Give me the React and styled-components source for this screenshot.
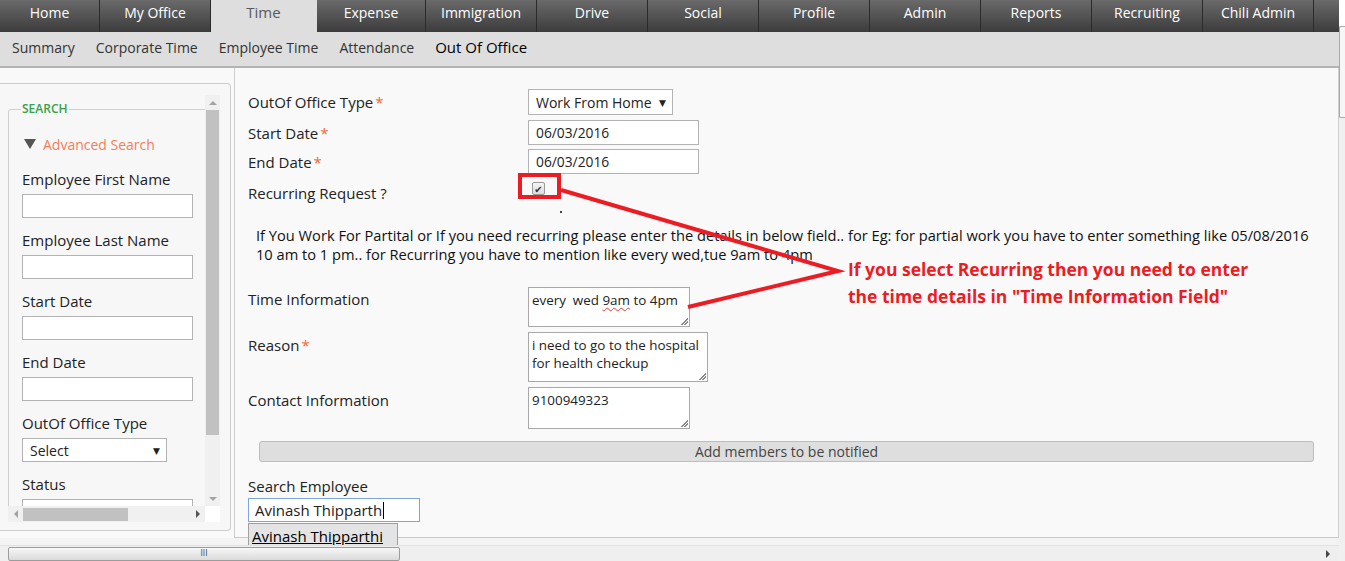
import React from 'react';
import styled, { createGlobalStyle } from 'styled-components';

const Global = createGlobalStyle`
  html, body { margin: 0; padding: 0; background: #f9f9f9; }
  body { font-family: "Open Sans", "DejaVu Sans", sans-serif; color: #222; }
  * { box-sizing: border-box; }
`;

const Screen = styled.div`
  position: relative;
  width: 1345px;
  height: 561px;
  overflow: hidden;
  display: grid;
  grid-template-columns: 1339px 6px;
  grid-template-rows: 545px 16px;
`;

const Page = styled.div`
  display: flex;
  flex-direction: column;
  min-height: 0;
  background: #f3f3f3;
`;

const TopNav = styled.nav`
  display: flex;
  height: 32px;
  background: linear-gradient(#6a6a6a, #3c3c3c);
`;

const Tab = styled.div`
  width: ${p => p.w}px;
  display: flex;
  align-items: center;
  justify-content: center;
  font-size: ${p => (p.active ? 15 : 14)}px;
  color: ${p => (p.active ? '#5a5a5a' : '#fff')};
  background: ${p => (p.active ? '#dedede' : 'transparent')};
  border-right: 1px solid ${p => (p.active ? '#dedede' : '#2b2b2b')};
  padding-bottom: 8px;
`;

const SubNav = styled.div`
  display: flex;
  align-items: center;
  gap: 21px;
  height: 36px;
  padding: 0 0 4px 12px;
  background: #dedede;
  border-bottom: 2px solid #b4b4b4;
`;

const SubItem = styled.span`
  font-size: ${p => (p.active ? 15 : 14)}px;
  color: ${p => (p.active ? '#000' : '#333')};
`;

const Body = styled.div`
  display: flex;
  min-height: 0;
  height: 470px;
  flex: none;
`;

const LeftPanel = styled.aside`
  width: 235px;
  border-right: 1px solid #cfcfcf;
  background: #f9f9f9;
  padding: 15px 0 7px 0;
`;

const SideBox = styled.div`
  width: 231px;
  height: 448px;
  border: 1px solid #cdcdcd;
  border-left: none;
  border-radius: 0 4px 4px 0;
  background: #f7f7f7;
  padding: 11px 0 0 8px;
`;

const ScrollArea = styled.div`
  display: grid;
  grid-template-columns: 197px 15px;
  grid-template-rows: 411px 16px;
`;

const Viewport = styled.div`
  overflow: hidden;
  padding-top: 6px;
`;

const Fieldset = styled.fieldset`
  width: 260px;
  margin: 0;
  padding: 17px 13px 0 13px;
  border: 1px solid #cfcfcf;
  border-radius: 3px;
`;

const Legend = styled.legend`
  font-size: 12px;
  font-weight: 600;
  color: #3aa047;
  padding: 0 1px;
  margin-left: -1px;
  line-height: 16px;
`;

const AdvRow = styled.div`
  display: flex;
  align-items: center;
  gap: 7px;
  height: 20px;
  margin: 0 0 15px 2px;
  font-size: 14px;
  color: #f47d5d;
`;

const Tri = styled.span`
  width: 0;
  height: 0;
  border-left: 6px solid transparent;
  border-right: 6px solid transparent;
  border-top: 10px solid #555;
`;

const SideLabel = styled.div`
  font-size: 15px;
  line-height: 20px;
  height: 20px;
  color: #222;
  margin-bottom: 5px;
  white-space: nowrap;
`;

const SideInput = styled.div`
  width: ${p => p.w || 171}px;
  height: 24px;
  border: 1px solid #b3b3b3;
  background: #fff;
  margin-bottom: 12px;
  display: flex;
  align-items: center;
  justify-content: space-between;
  padding: 0 6px 0 7px;
  font-size: 14px;
  color: #222;
`;

const SmallArrow = styled.span`
  font-size: 9px;
  color: #222;
`;

const VBar = styled.div`
  background: #f0f0f0;
  display: flex;
  flex-direction: column;
  align-items: center;
`;

const ArrowBtn = styled.div`
  width: 15px;
  height: 15px;
  display: flex;
  align-items: center;
  justify-content: center;
`;

const TriUp = styled.span`
  width: 0; height: 0;
  border-left: 4px solid transparent;
  border-right: 4px solid transparent;
  border-${p => (p.down ? 'top' : 'bottom')}: 4px solid #a3a3a3;
`;

const TriSide = styled.span`
  width: 0; height: 0;
  border-top: 4px solid transparent;
  border-bottom: 4px solid transparent;
  border-${p => (p.right ? 'left' : 'right')}: 4px solid ${p => p.color || '#a3a3a3'};
`;

const VThumb = styled.div`
  width: 13px;
  height: 325px;
  background: #c1c1c1;
`;

const Fill = styled.div`
  flex: 1;
`;

const HBar = styled.div`
  background: #f0f0f0;
  display: flex;
  align-items: center;
`;

const HThumb = styled.div`
  width: 105px;
  height: 13px;
  background: #c1c1c1;
`;

const Corner = styled.div`
  background: #fff;
`;

const Main = styled.main`
  flex: 1;
  position: relative;
  background: #f9f9f9;
  border-right: 1px solid #d0d0d0;
  border-bottom: 1px solid #c8c8c8;
  padding: 21px 0 0 13px;
`;

const Row = styled.div`
  display: flex;
  align-items: ${p => (p.top ? 'flex-start' : 'center')};
  margin-top: ${p => p.mt || 0}px;
  height: ${p => p.h}px;
`;

const Label = styled.div`
  width: 280px;
  font-size: 15px;
  line-height: 20px;
  color: #222;
  padding-top: ${p => p.pt || 0}px;
`;

const Star = styled.span`
  color: #f0663a;
  margin-left: 2px;
`;

const Field = styled.div`
  width: ${p => p.w}px;
  height: ${p => p.h}px;
  border: 1px solid #b3b3b3;
  background: #fff;
  display: flex;
  align-items: center;
  justify-content: space-between;
  padding: 0 6px 0 7px;
  font-size: ${p => p.fs || 13.8}px;
  color: #222;
`;

const TextArea = styled.div`
  position: relative;
  width: ${p => p.w}px;
  height: ${p => p.h}px;
  border: 1px solid #a9a9a9;
  background: #fff;
  padding: 3px 3px;
  font-size: 13.4px;
  line-height: 18px;
  color: #222;
  &::after {
    content: '';
    position: absolute;
    right: 1px;
    bottom: 1px;
    width: 7px;
    height: 7px;
    background: linear-gradient(135deg, transparent 48%, #888 48%, #888 58%, transparent 58%, transparent 70%, #888 70%, #888 80%, transparent 80%);
  }
`;

const Squiggle = styled.span`
  text-decoration: underline wavy #e53935;
  text-decoration-thickness: 1px;
  text-underline-offset: 2px;
`;

const CheckWrap = styled.div`
  padding: 0 0 0 4px;
  align-self: flex-start;
`;

const Check = styled.div`
  width: 13px;
  height: 13px;
  border: 1px solid #9a9a9a;
  border-radius: 2px;
  background: linear-gradient(#f4f4f4, #dcdcdc);
  display: flex;
  align-items: center;
  justify-content: center;
  font-size: 10px;
  line-height: 1;
  color: #333;
`;

const Dot = styled.div`
  width: 2px;
  height: 2px;
  background: #444;
  margin: 9px 0 0 312px;
`;

const Note = styled.p`
  margin: 13px 0 0 8px;
  font-size: 14.65px;
  line-height: 19px;
  color: #111;
  white-space: nowrap;
`;

const ButtonWrap = styled.div`
  margin: 12px 24px 0 11px;
`;

const AddButton = styled.div`
  height: 21px;
  border: 1px solid #bdbdbd;
  border-radius: 3px;
  background: #dedede;
  display: flex;
  align-items: center;
  justify-content: center;
  font-size: 14px;
  color: #444;
`;

const SearchLabel = styled.div`
  margin-top: 14px;
  font-size: 15px;
  line-height: 20px;
  color: #222;
`;

const SearchBox = styled.div`
  position: relative;
  margin-top: 2px;
  width: 172px;
  height: 24px;
  border: 1px solid #7ba6df;
  background: #fff;
  display: flex;
  align-items: center;
  padding-left: 6px;
  font-size: 15px;
  color: #222;
`;

const Caret = styled.span`
  width: 1px;
  height: 17px;
  background: #000;
  margin-left: 1px;
`;

const Suggest = styled.div`
  position: absolute;
  top: 24px;
  left: -1px;
  width: 150px;
  height: 23px;
  background: #e4e4e4;
  border: 1px solid #a0a0a0;
  border-bottom: none;
  padding: 3px 0 0 3px;
  font-size: 15px;
  line-height: 18px;
  color: #000;
  text-decoration: underline;
  white-space: nowrap;
  z-index: 3;
`;

const PageV = styled.div`
  grid-row: 1 / 3;
  grid-column: 2;
  background: #f0f0f0;
  display: flex;
  flex-direction: column;
`;

const PageVTop = styled.div`
  height: 26px;
  background: #fff;
`;

const PageVThumb = styled.div`
  height: 92px;
  border: 1px solid #a8a8a8;
  border-right: none;
  border-radius: 2px 0 0 2px;
  background: #f6f6f6;
`;

const PageH = styled.div`
  grid-column: 1;
  position: relative;
  z-index: 4;
  background: #efefef;
  border-top: 1px solid #e2e2e2;
  display: flex;
  align-items: center;
  justify-content: space-between;
  padding: 0 9px 0 8px;
`;

const PageHThumb = styled.div`
  width: 392px;
  height: 14px;
  border: 1px solid #9c9c9c;
  border-radius: 2px;
  background: linear-gradient(#f7f7f7, #dadada);
  display: flex;
  align-items: center;
  justify-content: center;
  font-size: 8px;
  color: #555;
  font-family: "DejaVu Sans", sans-serif;
`;

const Annotation = styled.div`
  position: absolute;
  left: 848px;
  top: 256px;
  font-size: 17.5px;
  font-weight: 700;
  line-height: 27px;
  color: #ec1c24;
  white-space: nowrap;
  z-index: 5;
`;

const Overlay = styled.svg`
  position: absolute;
  left: 0;
  top: 0;
  pointer-events: none;
  z-index: 5;
`;

const tabs = [
  ['Home', 100], ['My Office', 111], ['Time', 106, true], ['Expense', 109],
  ['Immigration', 111], ['Drive', 111], ['Social', 111], ['Profile', 111],
  ['Admin', 111], ['Reports', 111], ['Recruiting', 111], ['Chili Admin', 111],
];

const subs = ['Summary', 'Corporate Time', 'Employee Time', 'Attendance'];

const sideFields = ['Employee First Name', 'Employee Last Name', 'Start Date', 'End Date'];

export default function App() {
  return (
    <Screen>
      <Global />
      <Page>
        <TopNav>
          {tabs.map(([t, w, a]) => (
            <Tab key={t} w={w} active={a}>{t}</Tab>
          ))}
        </TopNav>
        <SubNav>
          {subs.map(s => <SubItem key={s}>{s}</SubItem>)}
          <SubItem active>Out Of Office</SubItem>
        </SubNav>
        <Body>
          <LeftPanel>
            <SideBox>
              <ScrollArea>
                <Viewport>
                  <Fieldset>
                    <Legend>SEARCH</Legend>
                    <AdvRow><Tri />Advanced Search</AdvRow>
                    {sideFields.map(f => (
                      <React.Fragment key={f}>
                        <SideLabel>{f}</SideLabel>
                        <SideInput />
                      </React.Fragment>
                    ))}
                    <SideLabel>OutOf Office Type</SideLabel>
                    <SideInput w={145}>Select<SmallArrow>▼</SmallArrow></SideInput>
                    <SideLabel>Status</SideLabel>
                    <SideInput />
                  </Fieldset>
                </Viewport>
                <VBar>
                  <ArrowBtn><TriUp /></ArrowBtn>
                  <VThumb />
                  <Fill />
                  <ArrowBtn><TriUp down /></ArrowBtn>
                </VBar>
                <HBar>
                  <ArrowBtn><TriSide /></ArrowBtn>
                  <HThumb />
                  <Fill />
                  <ArrowBtn><TriSide right color="#555" /></ArrowBtn>
                </HBar>
                <Corner />
              </ScrollArea>
            </SideBox>
          </LeftPanel>
          <Main>
            <Row h={26}>
              <Label>OutOf Office Type<Star>*</Star></Label>
              <Field w={145} h={26} fs={14}>
                Work From Home
                <SmallArrow>▼</SmallArrow>
              </Field>
            </Row>
            <Row h={25} mt={5}>
              <Label>Start Date<Star>*</Star></Label>
              <Field w={171} h={25}>06/03/2016</Field>
            </Row>
            <Row h={25} mt={4}>
              <Label>End Date<Star>*</Star></Label>
              <Field w={171} h={25}>06/03/2016</Field>
            </Row>
            <Row h={20} mt={8} top>
              <Label pt={1}>Recurring Request ?</Label>
              <CheckWrap><Check>✔</Check></CheckWrap>
            </Row>
            <Dot />
            <Note>
              If You Work For Partital or If you need recurring please enter the details in below field.. for Eg: for partial work you have to enter something like 05/08/2016
              <br />
              10 am to 1 pm.. for Recurring you have to mention like every wed,tue 9am to 4pm
            </Note>
            <Row h={40} mt={23} top>
              <Label pt={2}>Time Information</Label>
              <TextArea w={162} h={40}>every&nbsp; wed <Squiggle>9am</Squiggle> to 4pm</TextArea>
            </Row>
            <Row h={50} mt={5} top>
              <Label pt={3}>Reason<Star>*</Star></Label>
              <TextArea w={180} h={50}>i need to go to the hospital for health checkup</TextArea>
            </Row>
            <Row h={42} mt={5} top>
              <Label pt={3}>Contact Information</Label>
              <TextArea w={162} h={42}>9100949323</TextArea>
            </Row>
            <ButtonWrap>
              <AddButton>Add members to be notified</AddButton>
            </ButtonWrap>
            <SearchLabel>Search Employee</SearchLabel>
            <SearchBox>
              Avinash Thipparth<Caret />
              <Suggest>Avinash Thipparthi</Suggest>
            </SearchBox>
          </Main>
        </Body>
      </Page>
      <PageV>
        <PageVTop />
        <PageVThumb />
      </PageV>
      <PageH>
        <PageHThumb>III</PageHThumb>
        <TriSide right color="#444" />
      </PageH>

      <Annotation>
        If you select Recurring then you need to enter
        <br />
        the time details in "Time Information Field"
      </Annotation>
      <Overlay width="1345" height="561" viewBox="0 0 1345 561">
        <rect x="520" y="175" width="39" height="22" fill="none" stroke="#ec1c24" strokeWidth="4" />
        <polyline points="561,190 838,271 688,307" fill="none" stroke="#ec1c24" strokeWidth="4" strokeLinejoin="miter" />
      </Overlay>
    </Screen>
  );
}
